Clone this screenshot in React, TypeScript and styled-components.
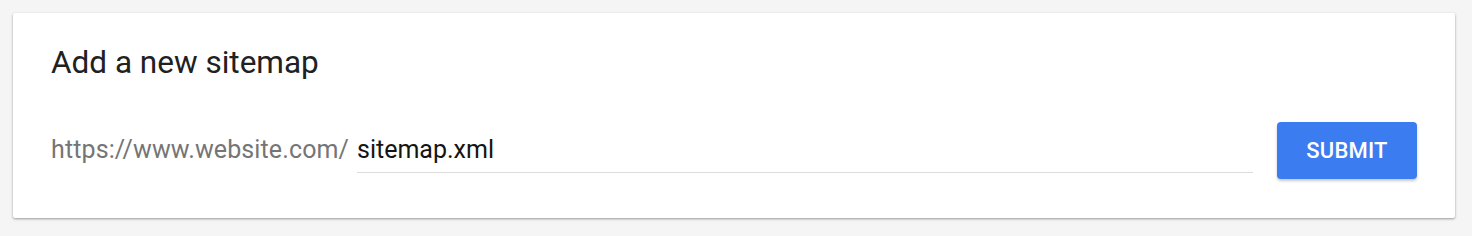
import React from "react";
import styled, { createGlobalStyle } from "styled-components";

const Global = createGlobalStyle`
  html, body { margin: 0; padding: 0; background: #f5f5f5; }
  body { font-family: Roboto, "Noto Sans", Arial, sans-serif; }
`;

const Page = styled.div`
  padding: 13px 17px 18px 13px;
`;

const Card = styled.section`
  background: #fff;
  border-radius: 2px;
  box-shadow: 0 1px 3px rgba(0,0,0,0.28), 0 1px 2px rgba(0,0,0,0.12);
  padding: 31px 38px 0 38px;
  height: 205px;
  box-sizing: border-box;
`;

const Title = styled.h2`
  margin: 0;
  font-size: 31.5px;
  font-weight: 400;
  color: #212121;
  line-height: 37px;
`;

const Row = styled.div`
  display: flex;
  align-items: baseline;
  margin-top: 41px;
`;

const Prefix = styled.span`
  font-size: 25px;
  letter-spacing: 0.12px;
  color: #757575;
  white-space: nowrap;
`;

const Field = styled.input`
  flex: 0 0 896px;
  width: 896px;
  margin-left: 8px;
  border: none;
  border-bottom: 1px solid #dcdcdc;
  font-family: inherit;
  font-size: 25px;
  color: #141414;
  padding: 0 0 8px 0;
  outline: none;
  background: transparent;
`;

const Button = styled.button`
  margin-left: auto;
  width: 140px;
  height: 57px;
  border: none;
  border-radius: 4px;
  background: #3b7cf0;
  color: #fff;
  font-family: inherit;
  font-weight: 500;
  font-size: 22px;
  letter-spacing: 0.2px;
  box-shadow: 0 2px 3px rgba(0,0,0,0.22);
  cursor: pointer;
  padding: 0;
`;

export default function App() {
  return (
    <>
      <Global />
      <Page>
        <Card>
          <Title>Add a new sitemap</Title>
          <Row>
            <Prefix>https://www.website.com/</Prefix>
            <Field defaultValue="sitemap.xml" />
            <Button>SUBMIT</Button>
          </Row>
        </Card>
      </Page>
    </>
  );
}
